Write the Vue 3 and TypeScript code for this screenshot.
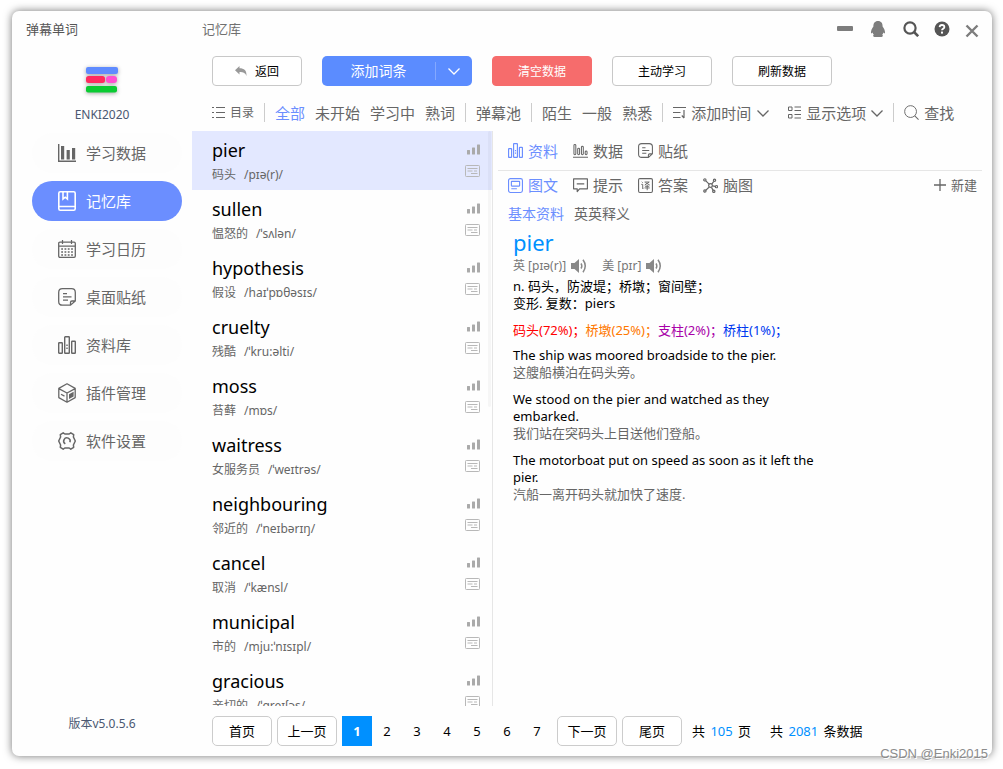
<script setup lang="ts">
import { ref } from 'vue'

interface NavItem { icon: string; label: string }
interface Word { word: string; meaning: string; phonetic: string }
interface Sense { text: string; tone: string }
interface Example { en: string; zh: string }

const nav: NavItem[] = [
  { icon: 'chart', label: '学习数据' },
  { icon: 'book', label: '记忆库' },
  { icon: 'calendar', label: '学习日历' },
  { icon: 'note', label: '桌面贴纸' },
  { icon: 'bars', label: '资料库' },
  { icon: 'cube', label: '插件管理' },
  { icon: 'gear', label: '软件设置' },
]

const filterGroups: string[][] = [
  ['全部', '未开始', '学习中', '熟词'],
  ['弹幕池'],
  ['陌生', '一般', '熟悉'],
]

const words: Word[] = [
  { word: 'pier', meaning: '码头', phonetic: '/pɪə(r)/' },
  { word: 'sullen', meaning: '愠怒的', phonetic: '/ˈsʌlən/' },
  { word: 'hypothesis', meaning: '假设', phonetic: '/haɪˈpɒθəsɪs/' },
  { word: 'cruelty', meaning: '残酷', phonetic: '/ˈkru:əlti/' },
  { word: 'moss', meaning: '苔藓', phonetic: '/mɒs/' },
  { word: 'waitress', meaning: '女服务员', phonetic: '/ˈweɪtrəs/' },
  { word: 'neighbouring', meaning: '邻近的', phonetic: '/ˈneɪbərɪŋ/' },
  { word: 'cancel', meaning: '取消', phonetic: '/ˈkænsl/' },
  { word: 'municipal', meaning: '市的', phonetic: '/mju:ˈnɪsɪpl/' },
  { word: 'gracious', meaning: '亲切的', phonetic: '/ˈɡreɪʃəs/' },
]

const dataTabs: NavItem[] = [
  { icon: 'bars', label: '资料' },
  { icon: 'stats', label: '数据' },
  { icon: 'note', label: '贴纸' },
]

const viewTabs: NavItem[] = [
  { icon: 'card', label: '图文' },
  { icon: 'hint', label: '提示' },
  { icon: 'answer', label: '答案' },
  { icon: 'mind', label: '脑图' },
]

const sourceTabs: string[] = ['基本资料', '英英释义']

const senses: Sense[] = [
  { text: '码头(72%)；', tone: 'red' },
  { text: '桥墩(25%)；', tone: 'orange' },
  { text: '支柱(2%)；', tone: 'purple' },
  { text: '桥柱(1%)；', tone: 'blue' },
]

const examples: Example[] = [
  { en: 'The ship was moored broadside to the pier.', zh: '这艘船横泊在码头旁。' },
  { en: 'We stood on the pier and watched as they embarked.', zh: '我们站在突码头上目送他们登船。' },
  { en: 'The motorboat put on speed as soon as it left the pier.', zh: '汽船一离开码头就加快了速度.' },
]

const activeNav = ref('记忆库')
const activeFilter = ref('全部')
const activeWord = ref('pier')
const activeData = ref('资料')
const activeView = ref('图文')
const activeSource = ref('基本资料')
const page = ref(1)
</script>

<template>
  <div class="desktop">
    <svg class="sprite" width="0" height="0" aria-hidden="true">
      <symbol id="chart" viewBox="0 0 18 18"><path d="M.7 0v17.3H18" fill="none" stroke="currentColor" stroke-width="1.4" /><path d="M3 2h3.2v13.4H3zM8.600 6h3.200v9.400H8.600zM14 4h3.200v11.400H14z" fill="currentColor" /></symbol>
      <symbol id="book" viewBox="0 0 18 20"><g fill="none" stroke="currentColor" stroke-width="1.6"><rect x=".8" y=".8" width="16.400" height="18.400" rx="1.500" /><path d="M1 15.500h16M5 1v7l2.200-1.800L9.400 8V1" /></g></symbol>
      <symbol id="calendar" viewBox="0 0 18 18"><g fill="none" stroke="currentColor"><rect x=".7" y="2.200" width="16.600" height="15.100" rx="1.200" stroke-width="1.300" /><path d="M1 6.200h16M4.500 0v4M13.500 0v4" stroke-width="1.200" /><path d="M3.200 9h12M3.200 12h12M3.200 15h12" stroke-width="1.700" stroke-dasharray="1.800 1.500" /></g></symbol>
      <symbol id="note" viewBox="0 0 18 18"><g fill="none" stroke="currentColor" stroke-width="1.300"><path d="M12.500 17.200H4.500Q.7 17.200.7 13.400V4.500Q.7.700 4.500.700h9Q17.300.700 17.300 4.500V13zM12.500 17v-2.500q0-1.500 1.500-1.500h3.200M5 5.600h4M5 8.900h8.500M5 12.200h5" /></g></symbol>
      <symbol id="bars" viewBox="0 0 18 18"><g fill="none" stroke="currentColor" stroke-width="1.400"><rect x=".7" y="6.700" width="3.600" height="10.600" rx=".6" /><rect x="6.700" y=".7" width="4.600" height="16.600" rx=".6" /><rect x="13.700" y="5.200" width="3.600" height="12.100" rx=".6" /><path d="M9 8.500v1.500M9 11.500v1.500" /></g></symbol>
      <symbol id="cube" viewBox="0 0 18 20"><g fill="none" stroke="currentColor" stroke-width="1.300" stroke-linejoin="round"><path d="M9 .8l8.200 4.600v9.200L9 19.200.8 14.600V5.400zM.8 5.600L9 10l8.200-4.400M9 10v9M3 11.200l3.500 1.900" /></g><path d="M11 11.200l4.600-2.500v4.700L11 16z" fill="currentColor" /></symbol>
      <symbol id="gear" viewBox="0 0 18 18"><g fill="none" stroke="currentColor" stroke-width="1.500" stroke-linejoin="round"><path d="M5.200.8l1.600 1.200h4.400l1.600-1.200 2.900 1.900-.3 2.300 1.900 4-1.900 4 .3 2.300-2.900 1.900-1.600-1.200H6.800l-1.600 1.200-2.900-1.900.3-2.300L.7 9l1.900-4-.3-2.300z" /><path d="M7.300 11.800a3.200 3.200 0 1 1 4.600-1.600" /></g></symbol>
      <symbol id="stats" viewBox="0 0 16 16"><g fill="none" stroke="currentColor" stroke-width="1.100"><path d="M0 15.300h16" /><rect x="1" y="1.500" width="2" height="11" rx="1" /><rect x="5" y="5.500" width="2" height="7" rx="1" /><rect x="9" y="3.500" width="2" height="9" rx="1" /><rect x="13" y="8.500" width="2" height="4" rx="1" /></g></symbol>
      <symbol id="card" viewBox="0 0 16 16"><g fill="none" stroke="currentColor" stroke-width="1.200"><rect x=".6" y=".6" width="14.800" height="14.800" rx="2" /><rect x="3.600" y="3.600" width="8.800" height="5" rx=".5" /><path d="M3.500 11.500h6" /></g></symbol>
      <symbol id="hint" viewBox="0 0 16 16"><path d="M.6 1h14.800v10.500H7L4.500 14.500V11.500H.6zM4 6.300h8" fill="none" stroke="currentColor" stroke-width="1.300" stroke-linejoin="round" /></symbol>
      <symbol id="answer" viewBox="0 0 16 16"><g fill="none" stroke="currentColor"><rect x=".6" y=".6" width="14.800" height="14.800" rx="1.500" stroke-width="1.200" /><path d="M4 4l1 1M3.500 6.800H5v4.700l1-1M7 4.300h5L7.200 7.500M8 5l4.500 2.500M7.500 8.800h4.500M7 10.600h5.500M9.800 7.500V13" stroke-width="1" /></g></symbol>
      <symbol id="mind" viewBox="0 0 16 16"><g fill="none" stroke="currentColor" stroke-width="1.300"><path d="M3 3l3.800 3.800M11.500 3.500L9.300 6.500M3 13l3.800-3.500M10 8.500l3 .5M9 10l2 3.500" /><circle cx="8" cy="8" r="2" /><circle cx="2" cy="2" r="1.200" /><circle cx="12.300" cy="2.500" r="1.200" /><circle cx="2" cy="13.800" r="1.200" /><circle cx="14.300" cy="9.200" r="1.200" /><circle cx="11.500" cy="14.200" r="1.200" /></g></symbol>
      <symbol id="list" viewBox="0 0 13 13"><path d="M0 1.500h2M4 1.500h9M0 6.500h2M4 6.500h9M0 11.500h2M4 11.500h9" stroke="currentColor" stroke-width="1.100" /></symbol>
      <symbol id="sort" viewBox="0 0 13 13"><path d="M0 1.500h13M0 6.500h7.500M0 11.500h7.500M11 4v8M8.800 9.500L11 12" fill="none" stroke="currentColor" stroke-width="1.200" /></symbol>
      <symbol id="options" viewBox="0 0 13 13"><path d="M.5 1h3.500v3.500H.5zM.5 8.500h3.500v3.500H.5zM6.500 1h6.500M6.500 4.500h6.500M6.500 8.500h6.500M6.500 12h6.500" fill="none" stroke="currentColor" /></symbol>
      <symbol id="chevron" viewBox="0 0 12 12"><path d="M.5 3.500L6 9l5.500-5.500" fill="none" stroke="currentColor" stroke-width="1.300" /></symbol>
      <symbol id="find" viewBox="0 0 16 16"><circle cx="7" cy="7" r="6.300" fill="none" stroke="currentColor" /><path d="M11.500 11.500l4 4" stroke="currentColor" stroke-width="1.100" /></symbol>
      <symbol id="plus" viewBox="0 0 12 12"><path d="M6 0v12M0 6h12" stroke="currentColor" stroke-width="1.300" /></symbol>
      <symbol id="reply" viewBox="0 0 12 10"><path d="M4.500 0v2.300C9 2.300 12 4.500 11.400 10 10.500 7 8.500 6 4.500 6v2.400L0 4.200z" fill="currentColor" /></symbol>
      <symbol id="signal" viewBox="0 0 13 11"><path d="M0 6.500Q0 6 .5 6h2q.5 0 .5.500V10q0 .5-.5.500h-2Q0 10.500 0 10zM5 4q0-.5.500-.5h2q.5 0 .5.500v6q0 .5-.5.500h-2Q5 10.500 5 10zM10 1q0-.5.500-.5h2q.5 0 .5.500v9q0 .5-.5.500h-2q-.5 0-.5-.5z" fill="currentColor" /></symbol>
      <symbol id="caption" viewBox="0 0 15 12"><g fill="none" stroke="currentColor"><rect x=".5" y=".5" width="14" height="11" rx=".8" /><path d="M2.500 3.500h10M2.500 6h5M9 6h3M6 8.500h6.500" /></g></symbol>
      <symbol id="sound" viewBox="0 0 16 14"><path d="M0 4h3.500L8 0v14L3.500 10H0z" fill="currentColor" /><path d="M10 4.500q1.600 2.500 0 5M12 .800q4.500 6.200 0 12.400" fill="none" stroke="currentColor" stroke-width="1.500" /></symbol>
      <symbol id="minus" viewBox="0 0 16 16"><rect y="5" width="16" height="5" rx="1" fill="currentColor" /></symbol>
      <symbol id="penguin" viewBox="0 0 16 16"><path d="M8 0C4.800 0 3.300 2.300 3.400 5.500 2 7.500.8 9.500 1 12c.1.700.9.500 1.500-.4.300 1 .7 1.600 1.300 2.200-1 .6-1 2 .6 2.200h7.200c1.600-.2 1.600-1.600.6-2.200.6-.6 1-1.200 1.300-2.200.6.900 1.400 1.100 1.500.4.200-2.500-1-4.500-2.400-6.500C12.700 2.300 11.200 0 8 0z" fill="currentColor" /></symbol>
      <symbol id="search" viewBox="0 0 16 16"><circle cx="7" cy="7" r="5.600" fill="none" stroke="currentColor" stroke-width="2.200" /><path d="M11 11l4.200 4.200" stroke="currentColor" stroke-width="2.600" /></symbol>
      <symbol id="help" viewBox="0 0 16 16"><circle cx="8" cy="8" r="7.500" fill="currentColor" /><path d="M5.600 6.200q.2-2.200 2.400-2.200t2.400 2q0 1.200-1.400 1.900-1 .5-1 1.400" fill="none" stroke="#fff" stroke-width="1.800" /><rect x="7" y="10.600" width="2" height="2" fill="#fff" /></symbol>
      <symbol id="close" viewBox="0 0 14 14"><path d="M1.500 1.500l11 11M12.500 1.500l-11 11" stroke="currentColor" stroke-width="2.400" /></symbol>
    </svg>

    <div class="window">
      <aside class="sidebar">
        <div class="app-name">弹幕单词</div>
        <svg class="logo" viewBox="0 0 32 26" aria-hidden="true">
          <rect width="32" height="7" rx="2" fill="#5f8bff" />
          <rect y="9" width="19" height="7" rx="2.500" fill="#ff2a5f" />
          <rect x="20" y="9" width="11" height="7" rx="3" fill="#ff4fd0" />
          <rect y="19" width="31" height="6.500" rx="2" fill="#0acb32" />
        </svg>
        <div class="user">ENKI2020</div>
        <nav class="nav">
          <button v-for="n in nav" :key="n.label" type="button" class="nav-item" :class="{ active: n.label === activeNav }" @click="activeNav = n.label">
            <svg class="nav-icon"><use :href="'#' + n.icon" /></svg>
            <span class="nav-label">{{ n.label }}</span>
          </button>
        </nav>
        <div class="version">版本v5.0.5.6</div>
      </aside>

      <main class="main">
        <header class="titlebar">
          <h1>记忆库</h1>
          <div class="controls">
            <button type="button" class="ctl light" aria-label="最小化"><svg><use href="#minus" /></svg></button>
            <button type="button" class="ctl light penguin" aria-label="QQ"><svg><use href="#penguin" /></svg></button>
            <button type="button" class="ctl" aria-label="搜索"><svg><use href="#search" /></svg></button>
            <button type="button" class="ctl" aria-label="帮助"><svg><use href="#help" /></svg></button>
            <button type="button" class="ctl light close" aria-label="关闭"><svg><use href="#close" /></svg></button>
          </div>
        </header>

        <div class="toolbar">
          <button type="button" class="btn back"><svg><use href="#reply" /></svg>返回</button>
          <div class="split">
            <button type="button" class="split-main">添加词条</button>
            <button type="button" class="split-more" aria-label="更多"><svg><use href="#chevron" /></svg></button>
          </div>
          <button type="button" class="btn danger">清空数据</button>
          <button type="button" class="btn">主动学习</button>
          <button type="button" class="btn">刷新数据</button>
        </div>

        <div class="filters">
          <button type="button" class="filter small"><svg class="ico13"><use href="#list" /></svg>目录</button>
          <template v-for="(g, i) in filterGroups" :key="i">
            <span class="sep"></span>
            <button v-for="f in g" :key="f" type="button" class="filter" :class="{ on: f === activeFilter }" @click="activeFilter = f">{{ f }}</button>
          </template>
          <span class="sep"></span>
          <label class="filter sorter">
            <svg class="ico13"><use href="#sort" /></svg>
            <select aria-label="排序方式"><option>添加时间</option></select>
            <svg class="ico12"><use href="#chevron" /></svg>
          </label>
          <button type="button" class="filter" aria-haspopup="menu"><svg class="ico13"><use href="#options" /></svg>显示选项<svg class="ico12"><use href="#chevron" /></svg></button>
          <span class="sep"></span>
          <button type="button" class="filter"><svg class="ico15"><use href="#find" /></svg>查找</button>
        </div>

        <div class="content">
          <ul class="words">
            <li v-for="w in words" :key="w.word" class="word" :class="{ selected: w.word === activeWord }" @click="activeWord = w.word">
              <div class="word-text">
                <div class="term">{{ w.word }}</div>
                <div class="gloss"><span>{{ w.meaning }}</span><span>{{ w.phonetic }}</span></div>
              </div>
              <div class="word-icons">
                <svg class="signal"><use href="#signal" /></svg>
                <svg class="caption"><use href="#caption" /></svg>
              </div>
            </li>
          </ul>

          <section class="detail">
            <div class="tabs ruled">
              <button v-for="t in dataTabs" :key="t.label" type="button" class="tab" :class="{ on: t.label === activeData }" @click="activeData = t.label"><svg class="ico15"><use :href="'#' + t.icon" /></svg>{{ t.label }}</button>
            </div>
            <div class="tabs views">
              <button v-for="t in viewTabs" :key="t.label" type="button" class="tab" :class="{ on: t.label === activeView }" @click="activeView = t.label"><svg class="ico15"><use :href="'#' + t.icon" /></svg>{{ t.label }}</button>
              <button type="button" class="tab create"><svg class="ico12"><use href="#plus" /></svg>新建</button>
            </div>
            <div class="sources">
              <button v-for="s in sourceTabs" :key="s" type="button" class="source" :class="{ on: s === activeSource }" @click="activeSource = s">{{ s }}</button>
            </div>
            <article class="entry">
              <h2>pier</h2>
              <div class="sounds">
                <span>英 [pɪə(r)]</span>
                <button type="button" class="speak" aria-label="英式发音"><svg><use href="#sound" /></svg></button>
                <span class="us">美 [pɪr]</span>
                <button type="button" class="speak" aria-label="美式发音"><svg><use href="#sound" /></svg></button>
              </div>
              <p>n. 码头，防波堤；桥墩；窗间壁；</p>
              <p>变形. 复数：piers</p>
              <p class="senses"><span v-for="s in senses" :key="s.text" :class="s.tone">{{ s.text }}</span></p>
              <div v-for="e in examples" :key="e.en" class="example">
                <p>{{ e.en }}</p>
                <p class="zh">{{ e.zh }}</p>
              </div>
            </article>
          </section>
        </div>

        <footer class="pager">
          <button type="button" class="edge" @click="page = 1">首页</button>
          <button type="button" class="edge" @click="page = Math.max(1, page - 1)">上一页</button>
          <div class="pages">
            <button v-for="n in 7" :key="n" type="button" class="num" :class="{ current: n === page }" @click="page = n">{{ n }}</button>
          </div>
          <button type="button" class="edge" @click="page = Math.min(7, page + 1)">下一页</button>
          <button type="button" class="edge">尾页</button>
          <span class="total">共 <b>105</b> 页</span>
          <span class="total rows">共 <b>2081</b> 条数据</span>
        </footer>
      </main>
    </div>
    <div class="watermark">CSDN @Enki2015</div>
  </div>
</template>

<style>
body {
  margin: 0;
  background: #fff;
}
</style>

<style scoped>
* {
  box-sizing: border-box;
}
.desktop {
  position: relative;
  height: 100vh;
  padding: 11px 11px 13px 12px;
  overflow: hidden;
  font-family: "Noto Sans", "Noto Sans CJK SC", sans-serif;
  font-size: 13px;
  color: #000;
}
.sprite {
  position: absolute;
}
button,
select {
  margin: 0;
  padding: 0;
  border: 0;
  background: none;
  font: inherit;
  color: inherit;
  white-space: nowrap;
  cursor: pointer;
}
svg {
  display: block;
  flex: none;
}
h1,
h2,
p,
ul {
  margin: 0;
  padding: 0;
  font-weight: 400;
}
.window {
  display: flex;
  height: 100%;
  border-radius: 7px;
  background: #fefefe;
  box-shadow: 0 0 9px rgba(0, 0, 0, 0.55);
  overflow: hidden;
}
.sidebar {
  flex: none;
  display: flex;
  flex-direction: column;
  align-items: center;
  width: 180px;
}
.app-name {
  align-self: flex-start;
  padding-left: 14px;
  line-height: 36px;
  color: #555;
}
.logo {
  width: 32px;
  height: 26px;
  margin-top: 20px;
  overflow: visible;
  filter: drop-shadow(0 1px 2px rgba(0, 0, 0, 0.35));
}
.user {
  margin-top: 12px;
  line-height: 20px;
  font-size: 12px;
  color: #4b5872;
}
.nav {
  display: flex;
  flex-direction: column;
  gap: 8px;
  margin: 8px 0 0 10px;
}
.nav-item {
  display: flex;
  align-items: center;
  gap: 10px;
  width: 150px;
  height: 40px;
  padding-left: 26px;
  border-radius: 20px;
  font-size: 15px;
  color: #666;
  background: #fdfdfd;
}
.nav-item.active {
  background: #6b8eff;
  color: #fff;
}
.nav-icon {
  width: 18px;
  height: 20px;
}
.nav-label {
  padding-bottom: 2px;
}
.version {
  margin-top: auto;
  padding-bottom: 22px;
  line-height: 20px;
  font-size: 12px;
  color: #4b5872;
}
.main {
  flex: 1;
  min-width: 0;
  display: flex;
  flex-direction: column;
}
.titlebar {
  flex: none;
  display: flex;
  align-items: center;
  justify-content: space-between;
  height: 35px;
  padding: 0 13px 0 10px;
}
.titlebar h1 {
  font-size: 13px;
  color: #707070;
}
.controls {
  display: flex;
  align-items: center;
  gap: 15px;
}
.ctl {
  color: #555;
}
.ctl.light {
  color: #7d7d7d;
}
.ctl svg {
  width: 16px;
  height: 16px;
}
.penguin {
  padding: 0 2px;
}
.close {
  padding-top: 4px;
}
.close svg {
  width: 14px;
  height: 14px;
}
.toolbar {
  flex: none;
  display: flex;
  gap: 20px;
  padding: 10px 20px 0;
}
.btn {
  display: flex;
  align-items: center;
  justify-content: center;
  gap: 8px;
  width: 100px;
  height: 30px;
  border: 1px solid #c8c8c8;
  border-radius: 4px;
  background: #fff;
  font-size: 12px;
}
.back {
  width: 90px;
}
.back svg {
  width: 12px;
  height: 10px;
  color: #999;
}
.danger {
  border-color: #f66c6c;
  background: #f66c6c;
  color: #fff;
}
.split {
  display: flex;
  align-items: center;
  width: 150px;
  height: 30px;
  border-radius: 5px;
  background: #5b8cff;
  color: #fff;
}
.split-main {
  flex: 1;
  padding-bottom: 2px;
  font-size: 14px;
}
.split-more {
  display: flex;
  align-items: center;
  justify-content: center;
  width: 37px;
  height: 18px;
  border-left: 1px solid #84a8ff;
}
.split-more svg {
  width: 12px;
  height: 12px;
}
.filters {
  flex: none;
  display: flex;
  align-items: center;
  gap: 10px;
  height: 45px;
  padding: 8px 20px 0;
  color: #666;
}
.filter {
  display: flex;
  align-items: center;
  gap: 5px;
  font-size: 15px;
  line-height: 22px;
}
.filter.small {
  font-size: 12px;
}
.filter.on,
.tab.on,
.source.on {
  color: #6b8eff;
}
.sorter {
  margin-right: 9px;
}
.sorter select {
  appearance: none;
}
.sep {
  width: 1px;
  height: 19px;
  background: #ccc;
}
.ico12 {
  width: 12px;
  height: 12px;
}
.ico13 {
  width: 13px;
  height: 13px;
}
.ico15 {
  width: 15px;
  height: 15px;
}
.content {
  flex: 1;
  min-height: 0;
  display: flex;
}
.words {
  position: relative;
  flex: none;
  width: 301px;
  overflow-y: auto;
  scrollbar-width: none;
  border-right: 1px solid #e6e6e6;
  list-style: none;
}
/* faint scroll thumb over the right edge of the list */
.words::after {
  content: "";
  position: absolute;
  top: 0;
  right: 1px;
  width: 3px;
  height: 48%;
  border-radius: 2px;
  background: rgba(0, 0, 0, 0.03);
}
.word {
  display: flex;
  justify-content: space-between;
  height: 59px;
  padding: 6px 12px 0 20px;
}
.word.selected {
  background: #e3e8ff;
}
.term {
  font-size: 18px;
  line-height: 26px;
}
.gloss {
  display: flex;
  gap: 8px;
  font-size: 12px;
  line-height: 24px;
  color: #666;
}
.word-icons {
  display: flex;
  flex-direction: column;
  align-items: flex-end;
  gap: 10px;
  padding-top: 7px;
  color: #aaa;
}
.signal {
  width: 13px;
  height: 11px;
}
.caption {
  width: 15px;
  height: 12px;
  color: #b8b8b8;
}
.detail {
  flex: 1;
  min-width: 0;
  padding: 0 10px 0 5px;
}
.tabs {
  display: flex;
  align-items: center;
  gap: 15px;
  height: 30px;
  padding: 0 5px 0 10px;
  color: #666;
}
.tabs.ruled {
  height: 40px;
  border-bottom: 1px solid #e6e6e6;
}
.tabs.views {
  padding-bottom: 2px;
}
.tab {
  display: flex;
  align-items: center;
  gap: 5px;
  font-size: 15px;
  line-height: 22px;
}
.create {
  margin-left: auto;
  font-size: 13px;
}
.sources {
  display: flex;
  gap: 10px;
  padding-left: 10px;
  color: #666;
}
.source {
  font-size: 14px;
  line-height: 26px;
}
.entry {
  max-width: 335px;
  padding-left: 15px;
  line-height: 17px;
}
.entry h2 {
  font-size: 22px;
  line-height: 30px;
  color: #0090ff;
}
.sounds {
  display: flex;
  align-items: center;
  gap: 5px;
  margin-bottom: 4px;
  font-size: 12px;
  color: #777;
}
.us {
  margin-left: 10px;
}
.speak svg {
  width: 16px;
  height: 14px;
  color: #888;
}
.senses {
  margin: 10px 0 8px;
}
.red {
  color: #f00;
}
.orange {
  color: #ff7800;
}
.purple {
  color: #a800a8;
}
.blue {
  color: #0038f0;
}
.example {
  margin-bottom: 10px;
}
.zh {
  color: #666;
}
.pager {
  flex: none;
  display: flex;
  align-items: center;
  gap: 5px;
  height: 50px;
  padding: 0 20px;
}
.edge {
  width: 60px;
  height: 30px;
  padding-bottom: 2px;
  border: 1px solid #ccc;
  border-radius: 5px;
  background: #fff;
}
.pages {
  display: flex;
}
.num {
  width: 30px;
  height: 30px;
}
.num.current {
  background: #0090ff;
  color: #fff;
  font-weight: 700;
}
.total {
  margin-left: 5px;
  padding-bottom: 2px;
  white-space: pre;
}
.total b {
  margin: 0 2px;
  font-weight: 400;
  color: #0090ff;
}
.rows {
  margin-left: 14px;
}
.watermark {
  position: absolute;
  right: 15px;
  bottom: 6px;
  font: 13px/18px "Liberation Sans", sans-serif;
  color: #8c8c8c;
  text-shadow: 1px 1px 0 #fff;
}
</style>
